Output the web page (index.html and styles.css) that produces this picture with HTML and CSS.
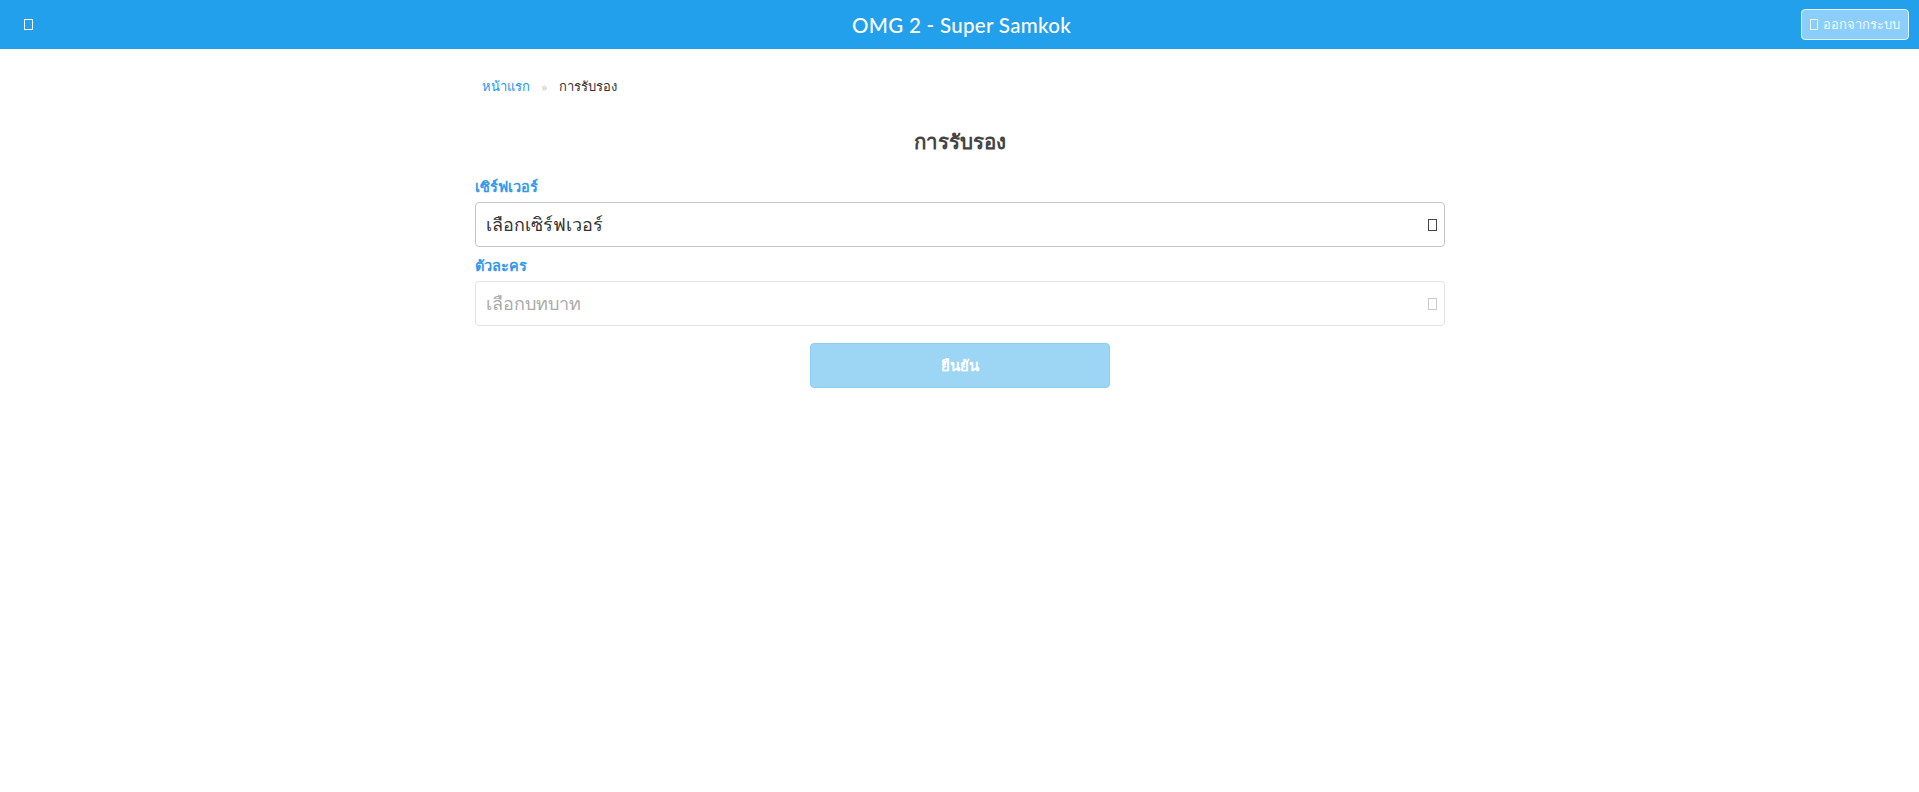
FILE: index.html
```html
<!DOCTYPE html>
<html lang="th">
<head>
<meta charset="utf-8">
<title>OMG 2 - Super Samkok</title>
<link rel="stylesheet" href="styles.css">
</head>
<body>
<header class="topbar">
  <div class="topbar-left"><span class="tofu tofu-white"></span></div>
  <div class="topbar-title">OMG 2 - Super Samkok</div>
  <div class="topbar-right">
    <button class="logout"><span class="tofu tofu-small"></span> ออกจากระบบ</button>
  </div>
</header>
<main class="container">
  <nav class="breadcrumb">
    <a href="#" class="crumb-link">หน้าแรก</a>
    <span class="crumb-sep">»</span>
    <span class="crumb-current">การรับรอง</span>
  </nav>
  <h1 class="page-title">การรับรอง</h1>
  <form class="form">
    <label class="field-label">เซิร์ฟเวอร์</label>
    <div class="select">
      <span class="select-text">เลือกเซิร์ฟเวอร์</span>
      <span class="tofu tofu-dark"></span>
    </div>
    <label class="field-label">ตัวละคร</label>
    <div class="select select-disabled">
      <span class="select-text">เลือกบทบาท</span>
      <span class="tofu tofu-light"></span>
    </div>
    <div class="actions">
      <button type="button" class="submit">ยืนยัน</button>
    </div>
  </form>
</main>
</body>
</html>
```
FILE: styles.css
```css
html, body {
  margin: 0;
  padding: 0;
  background: #fff;
  font-family: "Noto Sans", "DejaVu Sans", sans-serif;
  color: #333;
}
.topbar {
  height: 49px;
  background: #22a0eb;
  display: flex;
  align-items: center;
  justify-content: space-between;
  padding: 0 10px 0 24px;
}
.topbar-left, .topbar-right {
  width: 120px;
  display: flex;
  align-items: center;
}
.topbar-right { justify-content: flex-end; }
.topbar-title {
  color: #fff;
  font-family: "Lato", "Noto Sans", sans-serif;
  font-size: 20.5px;
  font-weight: 500;
  letter-spacing: 0.3px;
  margin-right: 10px;
}
.tofu {
  display: inline-block;
  box-sizing: border-box;
  width: 9px;
  height: 12px;
  border: 1px solid currentColor;
}
.tofu-white { color: #fff; width: 9px; height: 11px; border-width: 1.5px; }
.tofu-small { width: 8px; height: 11px; color: rgba(255,255,255,0.85); margin-right: 2px; }
.tofu-dark { color: #444; }
.tofu-light { color: #c8c8c8; }
.logout {
  height: 31px;
  padding: 0 8px;
  background: #8ccefb;
  border: 1px solid #e8f4fd;
  border-radius: 4px;
  color: rgba(255,255,255,0.9);
  font-family: "Noto Sans", sans-serif;
  font-size: 13px;
  display: flex;
  align-items: center;
  gap: 3px;
}
.container {
  width: 970px;
  margin: 0 auto;
}
.breadcrumb {
  display: flex;
  align-items: center;
  gap: 10px;
  padding: 0 7px;
  margin-top: 26px;
  height: 22px;
  font-size: 13px;
}
.crumb-link { color: #2196f3; text-decoration: none; }
.crumb-sep { color: #c8c8c8; font-size: 11px; margin: 0 2px; }
.crumb-current { color: #333; }
.page-title {
  text-align: center;
  font-size: 20.5px;
  font-weight: 700;
  color: #444;
  margin: 30px 0 21px;
  line-height: 28px;
}
.form {
  display: flex;
  flex-direction: column;
}
.field-label {
  color: #3399ee;
  font-size: 14.5px;
  font-weight: 700;
  line-height: 20px;
  margin-bottom: 6px;
}
.select {
  box-sizing: border-box;
  height: 45px;
  border: 1px solid #c6c6c6;
  border-radius: 4px;
  display: flex;
  align-items: center;
  justify-content: space-between;
  padding: 0 7px 0 10px;
  margin-bottom: 8px;
}
.select-text {
  font-size: 18px;
  color: #333;
}
.select-disabled { border-color: #e2e2e2; }
.select-disabled .select-text { color: #aaa; }
.actions {
  display: flex;
  justify-content: center;
  margin-top: 9px;
}
.submit {
  width: 300px;
  height: 45px;
  background: #9dd5f5;
  border: 1px solid #8fcdf1;
  border-radius: 4px;
  color: #fff;
  font-family: "Noto Sans", sans-serif;
  font-size: 15px;
  font-weight: 700;
}
```
